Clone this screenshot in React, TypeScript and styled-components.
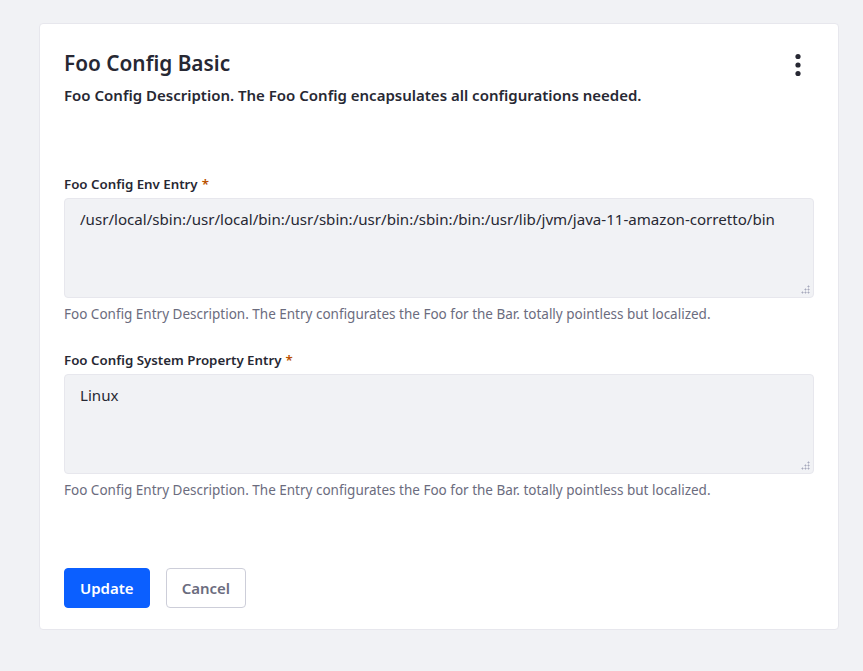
import React from "react";
import styled, { createGlobalStyle } from "styled-components";

const Global = createGlobalStyle`
  html, body { margin: 0; padding: 0; background: #f1f2f5; }
  body { font-family: "Noto Sans", "Open Sans", sans-serif; color: #272833; }
  * { box-sizing: border-box; }
`;

const Page = styled.div`
  padding: 23px 24px 41px 39px;
  min-height: 671px;
`;

const Card = styled.div`
  background: #fff;
  border: 1px solid #e7e7ed;
  border-radius: 4px;
  padding: 24px 24px 21px 24px;
`;

const Header = styled.div`
  display: flex;
  justify-content: space-between;
  align-items: flex-start;
`;

const Title = styled.h2`
  margin: 0;
  font-size: 20.8px;
  font-weight: 600;
  line-height: 30px;
  color: #272833;
`;

const Description = styled.p`
  margin: 6px 0 0;
  font-size: 15px;
  font-weight: 600;
  line-height: 22px;
  color: #272833;
`;

const Kebab = styled.button`
  border: none;
  background: transparent;
  width: 32px;
  height: 32px;
  margin-top: 1px;
  margin-right: 0px;
  display: flex;
  align-items: center;
  justify-content: center;
  padding: 0;
  color: #272833;
`;

const Form = styled.div`
  margin-top: 68px;
  display: flex;
  flex-direction: column;
  gap: 26px;
`;

const Group = styled.div`
  display: flex;
  flex-direction: column;
`;

const Label = styled.label`
  font-size: 13.3px;
  font-weight: 600;
  line-height: 20px;
  margin-bottom: 4px;
  color: #272833;
`;

const Star = styled.span`
  color: #b95000;
  margin-left: 4px;
`;

const TextArea = styled.textarea`
  width: 100%;
  height: 100px;
  background: #f1f2f5;
  border: 1px solid #e7e7ed;
  border-radius: 4px;
  padding: 8px 15px;
  font-family: inherit;
  font-size: 15.1px;
  line-height: 24px;
  color: #272833;
  resize: vertical;
  outline: none;
  display: block;

  &::-webkit-resizer {
    background-color: transparent;
    background-image:
      radial-gradient(circle, #a7a9bc 0.9px, transparent 1.1px),
      radial-gradient(circle, #a7a9bc 0.9px, transparent 1.1px),
      radial-gradient(circle, #a7a9bc 0.9px, transparent 1.1px),
      radial-gradient(circle, #a7a9bc 0.9px, transparent 1.1px),
      radial-gradient(circle, #a7a9bc 0.9px, transparent 1.1px),
      radial-gradient(circle, #a7a9bc 0.9px, transparent 1.1px);
    background-size: 3px 3px;
    background-repeat: no-repeat;
    background-position:
      9px 3px,
      6px 6px, 9px 6px,
      3px 9px, 6px 9px, 9px 9px;
  }
`;

const Help = styled.div`
  margin-top: 6px;
  font-size: 13.5px;
  line-height: 20px;
  color: #6b6c7e;
`;

const Actions = styled.div`
  display: flex;
  gap: 16px;
  margin-top: 68px;
`;

const Button = styled.button<{ $primary?: boolean }>`
  height: 40px;
  padding: 0 15px;
  border-radius: 4px;
  font-family: inherit;
  font-size: 15px;
  font-weight: 600;
  border: 1px solid ${(p) => (p.$primary ? "#0b5fff" : "#cdced9")};
  background: ${(p) => (p.$primary ? "#0b5fff" : "#fff")};
  color: ${(p) => (p.$primary ? "#fff" : "#6b6c7e")};
  cursor: pointer;
`;

const fields = [
  {
    label: "Foo Config Env Entry",
    value:
      "/usr/local/sbin:/usr/local/bin:/usr/sbin:/usr/bin:/sbin:/bin:/usr/lib/jvm/java-11-amazon-corretto/bin",
  },
  { label: "Foo Config System Property Entry", value: "Linux" },
];

export default function App() {
  return (
    <>
      <Global />
      <Page>
        <Card>
          <Header>
            <div>
              <Title>Foo Config Basic</Title>
              <Description>
                Foo Config Description. The Foo Config encapsulates all configurations needed.
              </Description>
            </div>
            <Kebab aria-label="Options">
              <svg width="6" height="24" viewBox="0 0 6 24">
                <circle cx="3" cy="3.5" r="2.6" fill="currentColor" />
                <circle cx="3" cy="12" r="2.6" fill="currentColor" />
                <circle cx="3" cy="20.5" r="2.6" fill="currentColor" />
              </svg>
            </Kebab>
          </Header>
          <Form>
            {fields.map((f) => (
              <Group key={f.label}>
                <Label>
                  {f.label}
                  <Star>*</Star>
                </Label>
                <TextArea defaultValue={f.value} />
                <Help>
                  Foo Config Entry Description. The Entry configurates the Foo for the Bar. totally pointless but localized.
                </Help>
              </Group>
            ))}
          </Form>
          <Actions>
            <Button $primary>Update</Button>
            <Button>Cancel</Button>
          </Actions>
        </Card>
      </Page>
    </>
  );
}
